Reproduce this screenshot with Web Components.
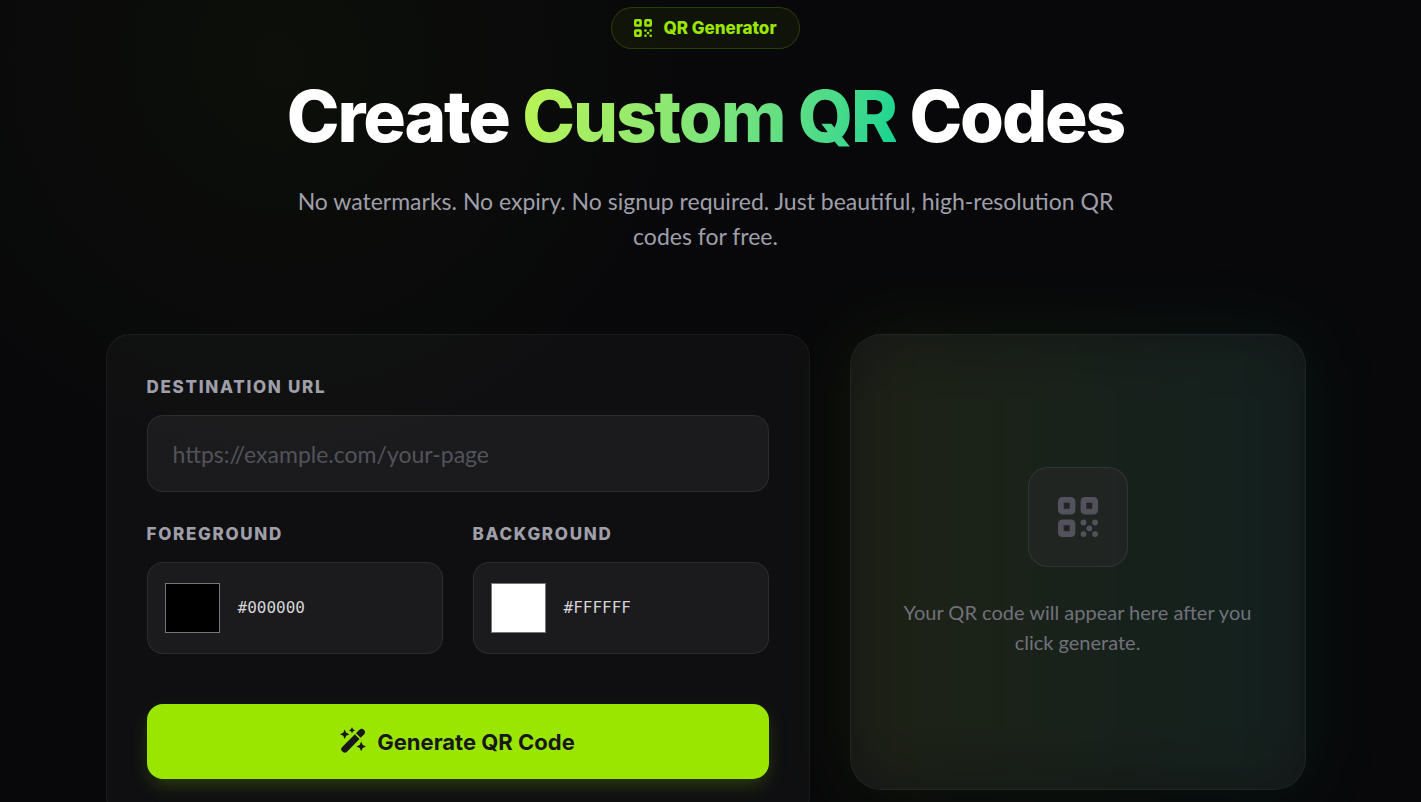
<!DOCTYPE html>
<html lang="en">
<head>
<meta charset="utf-8">
<title>QR Generator</title>
<style>
    html { background: #08080a; scrollbar-width: none; }
    body {
        margin: 0;
        color: #fff;
        font-family: Lato, "Open Sans", sans-serif;
        --display: Inter, "Liberation Sans", sans-serif;
        --lime: #9ae600;
        --muted: #9f9fa9;
        --dim: #52525c;
        --line: rgba(255, 255, 255, .08);
        --edge: rgba(255, 255, 255, .05);
    }
</style>
</head>
<body>
<qr-page>
    <qr-hero slot="hero">
        <qr-badge slot="badge">QR Generator</qr-badge>
        Create <em>Custom QR</em> Codes
        <span slot="lead">No watermarks. No expiry. No signup required. Just beautiful, high-resolution QR codes for free.</span>
    </qr-hero>
    <qr-form></qr-form>
    <qr-preview>Your QR code will appear here after you click generate.</qr-preview>
</qr-page>

<script>
function template(html) {
    const t = document.createElement('template');
    t.innerHTML = html;
    return t;
}

class Base extends HTMLElement {
    constructor() {
        super();
        this.attachShadow({mode: 'open'});
        this.shadowRoot.appendChild(this.constructor.template.content.cloneNode(true));
    }
}

/* Icons: <qr-icon name="code"> or <qr-icon name="wand"> */
const icons = {
    code: `<svg viewBox="0 0 40 40" fill="currentColor" aria-hidden="true">
        <path fill-rule="evenodd" d="M4.3 0h8.8a4.3 4.3 0 0 1 4.3 4.3v8.8a4.3 4.3 0 0 1-4.3 4.3H4.3A4.3 4.3 0 0 1 0 13.1V4.3A4.3 4.3 0 0 1 4.3 0zM5.7 5.7v6h6v-6z"/>
        <path fill-rule="evenodd" d="M26.9 0h8.8A4.3 4.3 0 0 1 40 4.3v8.8a4.3 4.3 0 0 1-4.3 4.3h-8.8a4.3 4.3 0 0 1-4.3-4.3V4.3A4.3 4.3 0 0 1 26.9 0zM28.3 5.7v6h6v-6z"/>
        <path fill-rule="evenodd" d="M4.3 22.6h8.8a4.3 4.3 0 0 1 4.3 4.3v8.8a4.3 4.3 0 0 1-4.3 4.3H4.3A4.3 4.3 0 0 1 0 35.7v-8.8a4.3 4.3 0 0 1 4.3-4.3zM5.7 28.3v6h6v-6z"/>
        <circle cx="25.5" cy="25.5" r="2.9"/><circle cx="37.1" cy="25.5" r="2.9"/>
        <circle cx="31.3" cy="31.3" r="2.9"/>
        <circle cx="25.5" cy="37.1" r="2.9"/><circle cx="37.1" cy="37.1" r="2.9"/>
    </svg>`,
    wand: `<svg viewBox="0 2 26 26" fill="currentColor" aria-hidden="true">
        <path d="M16 6.2 19.4 2.8a3.1 3.1 0 0 1 4.4 0l.2.2a3.1 3.1 0 0 1 0 4.4l-3.4 3.4z"/>
        <path d="M14.9 7.3 2.2 19.9a3.1 3.1 0 0 0 0 4.4l.4.4a3.1 3.1 0 0 0 4.4 0L19.5 11.9z"/>
        <path d="m4.7 2.5 1.5 3.3 3.3 1.5-3.3 1.5-1.5 3.3-1.5-3.3L0 7.3l3.2-1.5z"/>
        <path d="m12 0 1 2.2 2.2 1-2.2 1-1 2.2-1-2.2-2.2-1 2.2-1z"/>
        <path d="m21.2 14.6 1.5 3.3 3.3 1.5-3.3 1.5-1.5 3.3-1.5-3.3-3.3-1.5 3.3-1.5z"/>
    </svg>`
};

class QrIcon extends Base {
    static template = template(`
        <style>
            :host { display: inline-block; width: 18px; height: 18px; flex: none; }
            svg { display: block; width: 100%; height: 100%; overflow: visible; }
        </style>
    `);

    connectedCallback() {
        if (this.shadowRoot.querySelector('svg')) return;
        this.shadowRoot.appendChild(template(icons[this.getAttribute('name')]).content);
    }
}
customElements.define('qr-icon', QrIcon);

class QrBadge extends Base {
    static template = template(`
        <style>
            :host {
                display: inline-flex; align-items: center; gap: 11px;
                box-sizing: border-box; height: 42px; padding: 0 22px;
                border: 1px solid rgba(154, 230, 0, .2); border-radius: 21px;
                background: rgba(154, 230, 0, .05);
                color: var(--lime);
                font: 800 17px/24px var(--display);
            }
        </style>
        <qr-icon name="code"></qr-icon>
        <span><slot></slot></span>
    `);
}
customElements.define('qr-badge', QrBadge);

class QrHero extends Base {
    static template = template(`
        <style>
            :host { display: flex; flex-direction: column; align-items: center; text-align: center; }
            h1 { margin: 27px 0 0; font: 800 71px/80px var(--display); letter-spacing: -0.03em; }
            ::slotted(em) {
                font-style: normal;
                color: transparent;
                background: linear-gradient(105deg in oklab, #bbf451, #00d492);
                -webkit-background-clip: text;
                background-clip: text;
            }
            p { max-width: 840px; margin: 28px 0 0; color: var(--muted); font-size: 23px; line-height: 35px; }
        </style>
        <slot name="badge"></slot>
        <h1><slot></slot></h1>
        <p><slot name="lead"></slot></p>
    `);
}
customElements.define('qr-hero', QrHero);

/* Colour picker with its hex value beside it */
class QrColor extends Base {
    static template = template(`
        <style>
            :host { display: block; }
            label {
                display: block; margin-bottom: 16px;
                color: var(--muted);
                font: 800 17px/24px var(--display);
                letter-spacing: .1em; text-transform: uppercase;
            }
            .box {
                display: flex; align-items: center; gap: 18px;
                box-sizing: border-box; height: 92px; padding: 0 17px;
                border: 1px solid var(--line); border-radius: 16px;
                background: rgba(255, 255, 255, .05);
            }
            input {
                appearance: none; box-sizing: border-box;
                width: 55px; height: 50px; padding: 0;
                border: 1px solid #767676; background: none; cursor: pointer;
            }
            input::-webkit-color-swatch-wrapper { padding: 0; }
            input::-webkit-color-swatch { border: 0; }
            output { color: #d4d4d8; font: 16px/24px "DejaVu Sans Mono", monospace; }
        </style>
        <label for="color"><slot></slot></label>
        <div class="box">
            <input id="color" type="color">
            <output for="color"></output>
        </div>
    `);

    connectedCallback() {
        const input = this.shadowRoot.querySelector('input');
        const output = this.shadowRoot.querySelector('output');
        const show = () => { output.textContent = input.value.toUpperCase(); };
        input.value = this.getAttribute('value');
        input.addEventListener('input', show);
        show();
    }
}
customElements.define('qr-color', QrColor);

class QrForm extends Base {
    static template = template(`
        <style>
            :host {
                display: block; box-sizing: border-box; padding: 40px;
                border: 1px solid var(--edge); border-radius: 24px;
                background: rgba(255, 255, 255, .03);
            }
            label {
                display: block; margin-bottom: 16px;
                color: var(--muted);
                font: 800 17px/24px var(--display);
                letter-spacing: .1em; text-transform: uppercase;
            }
            input {
                display: block; box-sizing: border-box; width: 100%; height: 77px; padding: 0 25px;
                border: 1px solid var(--line); border-radius: 16px;
                background: rgba(255, 255, 255, .05);
                color: #fff; font: inherit; font-size: 23px;
            }
            input::placeholder { color: var(--dim); opacity: 1; }
            .colors { display: grid; grid-template-columns: 1fr 1fr; gap: 30px; margin: 30px 0 50px; }
            button {
                display: flex; align-items: center; justify-content: center; gap: 11px;
                width: 100%; height: 75px; padding: 0;
                border: 0; border-radius: 16px;
                background: var(--lime); color: #18181b;
                font: 700 22px/32px var(--display);
                box-shadow: 0 8px 20px -4px rgba(154, 230, 0, .25);
                cursor: pointer;
            }
            qr-icon { width: 26px; height: 26px; }
        </style>
        <form>
            <label for="url">Destination URL</label>
            <input id="url" type="url" placeholder="https://example.com/your-page">
            <div class="colors">
                <qr-color value="#000000">Foreground</qr-color>
                <qr-color value="#ffffff">Background</qr-color>
            </div>
            <button type="button"><qr-icon name="wand"></qr-icon>Generate QR Code</button>
        </form>
    `);
}
customElements.define('qr-form', QrForm);

class QrPreview extends Base {
    static template = template(`
        <style>
            :host { display: block; position: relative; }
            /* soft light behind the card */
            .glow {
                position: absolute; inset: 0; border-radius: 32px;
                background: linear-gradient(90deg, rgba(154, 230, 0, .07), rgba(0, 212, 146, .07));
                filter: blur(36px);
            }
            .card {
                position: relative; box-sizing: border-box; aspect-ratio: 1; padding: 0 40px;
                display: flex; flex-direction: column; align-items: center; justify-content: center; gap: 30px;
                border: 1px solid var(--edge); border-radius: 32px;
                background: rgba(255, 255, 255, .05);
            }
            .tile {
                display: grid; place-items: center; box-sizing: border-box;
                width: 100px; height: 100px;
                border: 1px solid var(--line); border-radius: 20px;
                background: rgba(39, 39, 42, .5); color: var(--dim);
            }
            qr-icon { width: 40px; height: 40px; }
            p { margin: 0; color: #71717b; font-size: 20px; line-height: 30px; text-align: center; }
        </style>
        <div class="glow"></div>
        <div class="card">
            <div class="tile"><qr-icon name="code"></qr-icon></div>
            <p><slot></slot></p>
        </div>
    `);
}
customElements.define('qr-preview', QrPreview);

class QrPage extends Base {
    static template = template(`
        <style>
            :host {
                display: block; box-sizing: border-box; min-height: 100vh; padding: 7px 10px 60px 0;
                background: radial-gradient(circle at 280px 60px, rgba(154, 230, 0, .03), transparent 420px);
            }
            main {
                display: grid; grid-template-columns: 704fr 456fr; gap: 40px; align-items: start;
                max-width: 1200px; margin: 80px auto 0;
            }
        </style>
        <slot name="hero"></slot>
        <main><slot></slot></main>
    `);
}
customElements.define('qr-page', QrPage);
</script>
</body>
</html>
